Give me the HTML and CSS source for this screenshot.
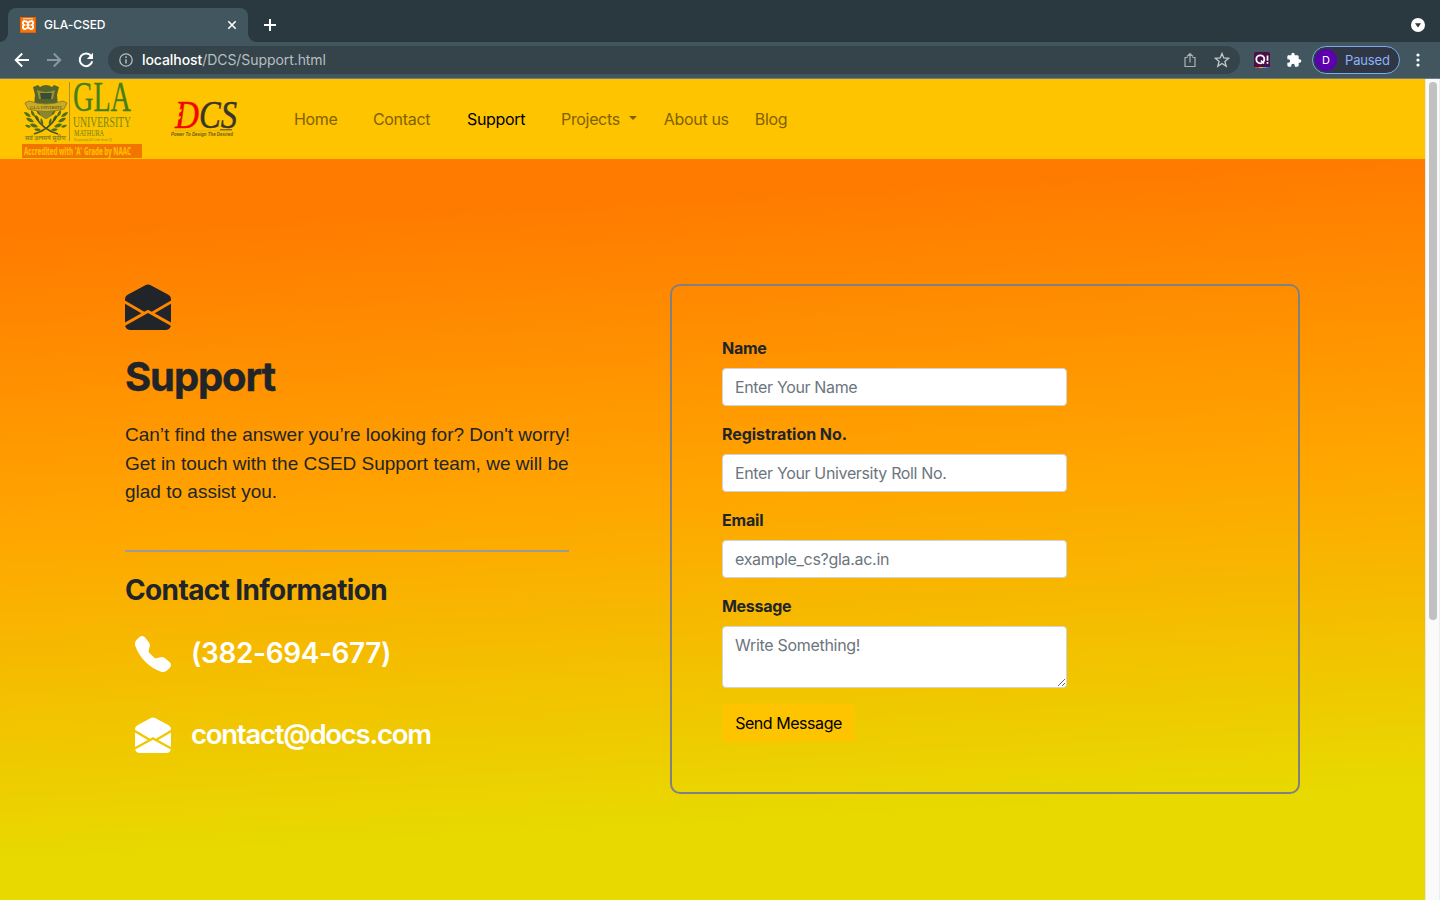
FILE: index.html
```html
<!DOCTYPE html>
<html lang="en">
<head>
<meta charset="utf-8">
<title>GLA-CSED</title>
<link rel="stylesheet" href="styles.css">
</head>
<body>
<svg width="0" height="0" class="defs"><defs>
<symbol id="mail" viewBox="0 0 16 16"><path d="M8.941.435a2 2 0 0 0-1.882 0l-6 3.2A2 2 0 0 0 0 5.4v.313l6.709 3.933L8 8.928l1.291.717L16 5.715V5.4a2 2 0 0 0-1.059-1.765l-6-3.2zM16 6.873l-5.693 3.337L16 13.372v-6.5zm-.059 7.611L8 10.072.059 14.484A2 2 0 0 0 2 16h12a2 2 0 0 0 1.941-1.516zM0 13.373l5.693-3.163L0 6.873v6.5z"/></symbol>
</defs></svg>
<header class="tabs">
  <div class="tab">
    <svg class="favicon" width="16" height="16" viewBox="0 0 16 16"><rect width="16" height="16" fill="#e0620c"/><rect x="1" y="1" width="14" height="14" fill="#f97400"/><path d="M3 1.700h10" stroke="#ffd9b0" stroke-width="1"/><path d="M8 6.200C7 4.200 6 4 5 4a2 2 0 0 0-1.200 3.700L4.300 8l-.5.300A2 2 0 0 0 5 12c1 0 2-.2 3-2.200 1 2 2 2.200 3 2.200a2 2 0 0 0 1.200-3.700L11.700 8l.5-.3A2 2 0 0 0 11 4c-1 0-2 .2-3 2.200zM6.500 8h3" fill="none" stroke="#fff" stroke-width="1.900"/></svg>
    <span class="tab-title">GLA-CSED</span>
    <svg class="close" width="10" height="10" viewBox="0 0 10 10"><path d="M1.300 1.300l7.400 7.400M8.700 1.300L1.300 8.700" stroke="#fff" stroke-width="1.600"/></svg>
  </div>
  <svg class="plus" width="14" height="14" viewBox="0 0 14 14"><path d="M7 1v12M1 7h12" stroke="#fff" stroke-width="2"/></svg>
  <svg class="tab-menu" width="14" height="14" viewBox="0 0 14 14"><circle cx="7" cy="7" r="7" fill="#fff"/><path d="M4 5.200h6L7 9.400z" fill="#2a383f"/></svg>
</header>
<div class="toolbar">
  <svg class="nav-icon" width="16" height="16" viewBox="0 0 16 16" fill="none" stroke="#fff" stroke-width="1.900"><path d="M15 8H2M8.200 1.500L1.700 8l6.500 6.500"/></svg>
  <svg class="nav-icon" width="16" height="16" viewBox="0 0 16 16" fill="none" stroke="#8b989f" stroke-width="1.900"><path d="M1 8h13M7.800 1.500L14.300 8l-6.500 6.500"/></svg>
  <svg class="nav-icon" width="16" height="16" viewBox="0 0 16 16"><path d="M13.200 4.200A6.300 6.300 0 1 0 14.200 9.200" fill="none" stroke="#fff" stroke-width="2"/><path d="M15 .8V7H8.800z" fill="#fff"/></svg>
  <div class="omnibox">
    <svg width="14" height="14" viewBox="0 0 14 14"><circle cx="7" cy="7" r="6.200" fill="none" stroke="#b4bcc0" stroke-width="1.300"/><path d="M7 6.200v4.300M7 3.300v1.600" stroke="#b4bcc0" stroke-width="1.500"/></svg>
    <span class="url"><b>localhost</b>/DCS/Support.html</span>
    <svg class="share" width="14" height="16" viewBox="0 0 14 16" fill="none" stroke="#a9b1b6" stroke-width="1.200"><path d="M4.500 5.500H2v9h10v-9H9.500M7 10.500V1.600M4 4.500l3-3 3 3"/></svg>
    <svg width="16" height="16" viewBox="0 0 16 16" fill="none" stroke="#c3c9cc" stroke-width="1.300"><path d="M8 1.500l1.800 4.500 4.900.3-3.800 3.100 1.300 4.800L8 11.500l-4.200 2.700 1.300-4.800L1.300 6.300l4.900-.3z"/></svg>
  </div>
  <svg class="ext" width="16" height="16" viewBox="0 0 16 16"><rect width="16" height="16" rx="2" fill="#4a1048"/><circle cx="6.300" cy="7.300" r="4" fill="none" stroke="#fff" stroke-width="1.800"/><path d="M7 8.500l3 3M13.500 3.500v5.300M13.500 10v1.800" stroke="#fff" stroke-width="1.700"/><path d="M1 15.500h4" stroke="#e9395c"/><path d="M5 15.500h4" stroke="#f5a623"/><path d="M9 15.500h3" stroke="#1bb5d8"/><path d="M12 15.500h3" stroke="#7855e0"/></svg>
  <svg class="puzzle" width="16" height="16" viewBox="0 0 24 24"><path fill="#fff" d="M20.500 11H19V7c0-1.100-.9-2-2-2h-4V3.500a2.500 2.500 0 0 0-5 0V5H4c-1.100 0-2 .9-2 2v3.800h1.500a2.700 2.700 0 0 1 0 5.400H2V20c0 1.100.9 2 2 2h3.800v-1.500a2.700 2.700 0 0 1 5.400 0V22H17c1.100 0 2-.9 2-2v-4h1.500a2.500 2.500 0 0 0 0-5z"/></svg>
  <div class="profile"><span class="avatar">D</span><span class="paused">Paused</span></div>
  <svg class="dots" width="4" height="14" viewBox="0 0 4 14" fill="#fff"><circle cx="2" cy="2" r="1.600"/><circle cx="2" cy="7" r="1.600"/><circle cx="2" cy="12" r="1.600"/></svg>
</div>
<div class="viewport">
  <div class="page">
    <nav class="navbar">
      <svg class="gla" width="120" height="78" viewBox="0 0 120 78">
        <path d="M11 7l5-2 2 2q6-4 12 0l2-2 5 2-2 8q2 12-3 19l-8 5-8-5q-5-7-3-19z" fill="#566528"/>
        <path d="M15 10q9 4 18 0l-2 9H17z" fill="#98913a"/><path d="M18 13h12l-1 6H19z" fill="#394d35"/>
        <path d="M16 30h16l-3 6-5 3-5-3z" fill="#8a872a"/>
        <path d="M3 23l4-2q17 6 34 0l4 2-3 6q-18 5-36 0z" fill="#c9ab25" stroke="#807529" stroke-width=".8"/>
        <text x="8" y="28.500" class="em-band" textLength="32" lengthAdjust="spacingAndGlyphs">G.L.A. UNIVERSITY</text>
        <g fill="#4e701f">
          <path id="leaves" d="M2 32q5 0 7 5-6 0-7-5zM4 38q5-1 8 4-6 1-8-4zM8 44q5-2 8 3-6 2-8-3zM9 30q4 2 4 7-5-2-4-7zM14 35q4 3 3 7-5-3-3-7zM3 45q4-1 6 2-4 2-6-2zM12 49q5-2 7 1-4 3-7-1zM19 38q3 3 2 7-4-3-2-7z"/>
          <use href="#leaves" transform="matrix(-1 0 0 1 48 0)"/>
        </g>
        <path d="M12 54q15-4 23-18M36 54q-15-4-23-18" fill="none" stroke="#455426" stroke-width="1.600"/>
        <text x="3" y="60" class="em-motto" textLength="41" lengthAdjust="spacingAndGlyphs">सर्वं ज्ञानमयं सुदीपः</text>
        <path d="M47.500 2v59" stroke="#a29420"/>
        <text x="51" y="31" class="g-main" textLength="58" lengthAdjust="spacingAndGlyphs">GLA</text>
        <text x="51" y="46.500" class="g-uni" textLength="58" lengthAdjust="spacingAndGlyphs">UNIVERSITY</text>
        <text x="52" y="56" class="g-math" textLength="30" lengthAdjust="spacingAndGlyphs">MATHURA</text>
        <text x="52" y="61" class="g-tiny" textLength="38" lengthAdjust="spacingAndGlyphs">Recognised by UGC Under Section 2(f)</text>
        <rect y="64" width="120" height="14" fill="#f27500"/>
        <text x="2" y="74.500" class="g-acc" textLength="107" lengthAdjust="spacingAndGlyphs">Accredited with 'A' Grade by NAAC</text>
      </svg>
      <svg class="dcs" width="72" height="42" viewBox="0 0 72 42">
        <text x="4" y="31" class="d-main d-red" textLength="24" lengthAdjust="spacingAndGlyphs">D</text>
        <text x="28" y="31" class="d-main" textLength="38" lengthAdjust="spacingAndGlyphs">CS</text>
        <path d="M7 13l4-1-1 3-3 1zM6 20l4-1-1 3-3 1z" fill="#ffc400"/><path d="M8 17l3-1-1 3zM7 24l3-1-1 3z" fill="#f00800"/>
        <path d="M49 32.800h12" stroke="#4d461e"/><path d="M2 33.800h60" stroke="#d3a51a" stroke-width=".6"/>
        <text x="0" y="38.500" class="d-sub" textLength="62" lengthAdjust="spacingAndGlyphs">Power To Design The Desired</text>
      </svg>
      <a class="n1">Home</a><a class="n2">Contact</a><a class="n3">Support</a><a class="n4">Projects</a><i class="caret"></i><a class="n5">About us</a><a class="n6">Blog</a>
    </nav>
    <main class="hero">
      <section class="info">
        <svg class="big-mail" width="46" height="46"><use href="#mail"/></svg>
        <h1>Support</h1>
        <p>Can’t find the answer you’re looking for? Don't worry!<br>Get in touch with the CSED Support team, we will be<br>glad to assist you.</p>
        <hr>
        <h2>Contact Information</h2>
        <div class="row phone"><svg width="36" height="36" viewBox="0 0 16 16"><path fill-rule="evenodd" d="M1.885.511a1.745 1.745 0 0 1 2.610.163L6.290 2.980c.329.423.445.974.315 1.494l-.547 2.190a.678.678 0 0 0 .178.643l2.457 2.457a.678.678 0 0 0 .644.178l2.189-.547a1.745 1.745 0 0 1 1.494.315l2.306 1.794c.829.645.905 1.870.163 2.611l-1.034 1.034c-.740.740-1.846 1.065-2.877.702a18.634 18.634 0 0 1-7.010-4.420 18.634 18.634 0 0 1-4.420-7.009c-.362-1.030-.037-2.137.703-2.877L1.885.511z"/></svg><span class="tel">(382-694-677)</span></div>
        <div class="row"><svg width="36" height="36"><use href="#mail"/></svg><span class="addr">contact@docs.com</span></div>
      </section>
      <form class="card">
        <label class="l1">Name</label><input class="field f1" placeholder="Enter Your Name">
        <label class="l2">Registration No.</label><input class="field f2" placeholder="Enter Your University Roll No.">
        <label class="l3">Email</label><input class="field f3" placeholder="example_cs?gla.ac.in">
        <label class="l4">Message</label><textarea class="field area" placeholder="Write Something!"></textarea>
        <button type="button">Send Message</button>
      </form>
    </main>
  </div>
  <div class="scroll"><div class="thumb"></div></div>
</div>
</body>
</html>
```
FILE: styles.css
```css
* { box-sizing: border-box; }
body { margin: 0; width: 1440px; height: 900px; overflow: hidden; display: flex; flex-direction: column; font: 16px/24px Inter, "Liberation Sans", sans-serif; color: #212529; }
.defs { position: absolute; }
svg { flex: none; display: block; }

.tabs { height: 42px; flex: none; background: #2a383f; display: flex; align-items: center; padding: 8px 15px 0 8px; }
.tab { width: 240px; height: 34px; background: #42565f; border-radius: 8px 8px 0 0; display: flex; align-items: center; padding: 0 11px 0 12px; position: relative; }
/* flared feet where the tab meets the toolbar */
.tab::before, .tab::after { content: ""; position: absolute; bottom: 0; width: 8px; height: 8px; }
.tab::before { left: -8px; background: radial-gradient(circle at 0 0, transparent 7.500px, #42565f 8px); }
.tab::after { right: -8px; background: radial-gradient(circle at 100% 0, transparent 7.500px, #42565f 8px); }
.tab-title { font-size: 12px; font-weight: 500; color: #fff; margin-left: 8px; letter-spacing: -.05px; flex: 1; }
.plus { margin-left: 15px; }
.tab-menu { margin-left: auto; }

.toolbar { height: 37px; flex: none; background: #42565f; border-bottom: 1px solid #6f7d85; display: flex; align-items: center; padding-left: 14px; }
.nav-icon { margin-right: 16px; }
.omnibox { width: 1132px; height: 28px; margin-left: -2px; border-radius: 14px; background: #35444b; display: flex; align-items: center; padding: 0 10px 0 11px; }
.url { flex: 1; margin-left: 9px; font-size: 14px; letter-spacing: -.07px; color: #b6bec2; }
.url b { font-weight: 500; color: #fff; }
.share { margin-right: 17px; }
.ext { margin-left: 14px; }
.puzzle { margin-left: 16px; }
.profile { width: 88px; height: 28px; margin-left: 10px; border: 1px solid #7ba9f5; border-radius: 14px; background: #303744; display: flex; align-items: center; padding-left: 2px; }
.avatar { width: 22px; height: 22px; border-radius: 50%; background: #5c00af; color: #fff; font-size: 11px; line-height: 22px; text-align: center; }
.paused { margin-left: 8px; font-size: 13px; letter-spacing: -.15px; color: #8ab4f8; }
.dots { margin-left: 16px; }

.viewport { flex: 1; display: flex; min-height: 0; }
.page { width: 1425px; display: flex; flex-direction: column; }
.navbar { height: 80px; flex: none; background: #ffc400; display: flex; align-items: center; padding-left: 22px; color: #7f6200; }
.gla, .dcs { overflow: visible; }
.em-band { font: bold 5px "Liberation Serif", serif; fill: #5b5a22; }
.em-motto { font: bold 6px "Noto Sans", sans-serif; fill: #8c8420; }
.g-main { font: 43px "Liberation Serif", serif; fill: #46801a; stroke: #46801a; stroke-width: .3px; }
.g-uni { font: 15px "Liberation Serif", serif; fill: #6f8a16; }
.g-math { font: 8px "Liberation Serif", serif; fill: #5f7f18; }
.g-tiny { font: 4px "Liberation Sans", sans-serif; fill: #8a8a1a; }
.g-acc { font: bold 10.500px "Open Sans", sans-serif; fill: #ffbe00; stroke: #ffbe00; stroke-width: .25px; }
.dcs { margin: -2px 51px 0 29px; }
.d-main { font: italic 39px "Liberation Serif", serif; fill: #38352a; stroke: #38352a; stroke-width: .5px; }
.d-red { fill: #f00800; stroke: #f00800; }
.d-sub { font: italic bold 5px "Liberation Sans", sans-serif; fill: #6b5e14; }
.n1 { width: 79px; }
.n2 { width: 94px; }
.n3 { width: 94px; color: #000; }
.n5 { width: 91px; }
.caret { border: 4.500px solid transparent; border-top-color: #7f6200; border-bottom: 0; margin: -2px 27px 0 9px; }
.n1, .n2, .n3, .n4, .n5, .n6 { white-space: nowrap; letter-spacing: -.33px; }

.hero { flex: 1; display: flex; align-items: flex-start; padding: 125px 0 0 125px; background: linear-gradient(177deg, #ff7b00 9%, #ffa600 46%, #e8d900 86%); }
.info { width: 545px; }
.big-mail { fill: #212529; }
h1 { margin: 22px 0 0; font-size: 40px; line-height: 50px; font-weight: 700; letter-spacing: -1.100px; -webkit-text-stroke: .4px #212529; }
p { margin: 19px 0 0; font: 19px/28.500px "Liberation Sans", Arial, sans-serif; white-space: nowrap; }
hr { width: 444px; height: 2px; margin: 43px 0 0; border: 0; background: #9c9c97; }
h2 { margin: 21px 0 0; font-size: 28px; line-height: 34px; font-weight: 700; letter-spacing: -.640px; }
.row { display: flex; align-items: center; height: 36px; margin: 45px 0 0 10px; color: #fff; fill: #fff; font-size: 28px; font-weight: 600; }
.phone { margin-top: 29px; }
.tel { margin: -1px 0 0 20px; letter-spacing: -.4px; }
.addr { margin: -2px 0 0 20px; font-size: 27.500px; letter-spacing: -1.250px; }

.card { width: 630px; height: 510px; border: 2px solid #808080; border-radius: 10px; padding: 50px; display: flex; flex-direction: column; align-items: flex-start; }
label { height: 24px; margin-bottom: 8px; font-weight: 700; letter-spacing: -.2px; }
.l1, .l4 { letter-spacing: -.3px; }
.l2 { letter-spacing: -.05px; }
.field { width: 345px; height: 38px; margin: 0 0 16px; padding: 6px 12px; border: 1px solid #ced4da; border-radius: 4px; background: #fff; font: inherit; letter-spacing: -.350px; outline: 0; }
.field::placeholder { color: #6c757d; opacity: 1; }
.f3 { letter-spacing: -.3px; }
.area { height: 62px; letter-spacing: -.3px; }
button { width: 133px; height: 38px; padding: 0; border: 0; border-radius: 4px; background: #ffc400; font: inherit; color: #000; letter-spacing: -.450px; }

.scroll { width: 15px; background: #fafafa; border-left: 1px solid #e8e8e8; border-right: 1px solid #ededed; padding: 3px 0 0 3px; }
.thumb { width: 8px; height: 538px; border-radius: 4px; background: #c1c1c1; }
```
